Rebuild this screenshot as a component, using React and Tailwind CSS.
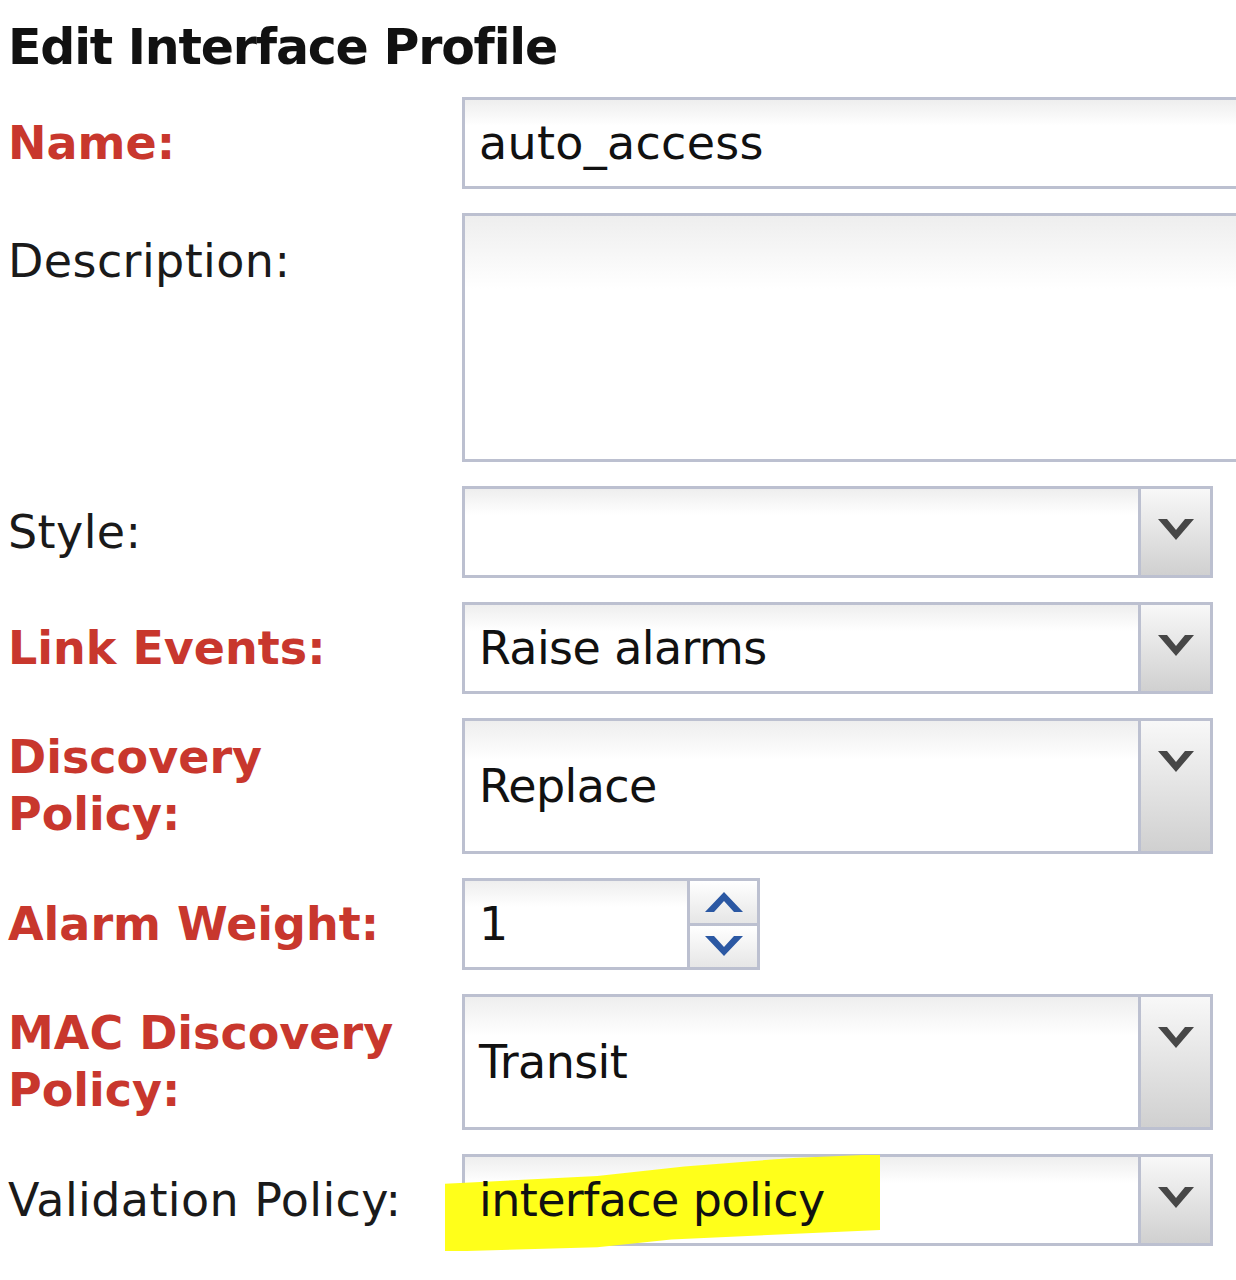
const font = "font-['DejaVu_Sans',Tahoma,sans-serif]"

function Label({ children, required, className = '' }) {
  return (
    <div
      className={
        'text-[46px] leading-[57px] ' +
        (required ? 'font-bold tracking-[0px] text-[#c8372d] ' : 'tracking-[0.4px] text-[#1a1a1a] ') +
        className
      }
    >
      {children}
    </div>
  )
}

function Chevron() {
  return (
    <svg width="36" height="24" viewBox="0 0 36 24">
      <polygon points="0,2 9,2 18,13 27,2 36,2 18,23" fill="#474747" />
    </svg>
  )
}

function Select({ value, tall, highlight }) {
  return (
    <div
      className={
        'relative flex w-[751px] border-[3px] border-[#bcc0d0] bg-gradient-to-b from-[#eeeeee] to-white to-[30%] ' +
        (tall ? 'h-[136px]' : 'h-[92px]')
      }
    >
      {highlight && (
        <div className="absolute left-[-20px] top-[-2px] h-[96px] w-[435px] bg-[#ffff1a] [clip-path:polygon(0_30%,35%_22%,55%_12%,80%_3%,96%_0,100%_0,100%_78%,52%_88%,35%_96%,5%_100%,0_100%)]" />
      )}
      <div className="relative flex flex-1 items-center pl-[14px] text-[46px] tracking-[-0.6px] text-[#111]">
        {value}
      </div>
      <div className="flex w-[72px] justify-center border-l-[3px] border-[#bcc0d0] bg-gradient-to-b from-[#f8f8f8] to-[#d0d0d0] pt-[28px]">
        <Chevron />
      </div>
    </div>
  )
}

function TextBox({ value, height }) {
  return (
    <div
      className={
        'flex w-[800px] items-center border-[3px] border-[#bcc0d0] bg-gradient-to-b from-[#eeeeee] to-white to-[30%] pl-[14px] text-[46px] tracking-[0.3px] text-[#111] ' +
        height
      }
    >
      {value}
    </div>
  )
}

function Spinner() {
  return (
    <div className="flex h-[92px] w-[298px] border-[3px] border-[#bcc0d0] bg-gradient-to-b from-[#eeeeee] to-white to-[30%]">
      <div className="flex flex-1 items-center pl-[14px] text-[46px] text-[#111]">1</div>
      <div className="flex w-[70px] flex-col border-l-[3px] border-[#bcc0d0]">
        <div className="flex flex-1 items-center justify-center border-b-[3px] border-[#bcc0d0] bg-gradient-to-b from-white to-[#e6e6e6]">
          <svg width="38" height="22" viewBox="0 0 38 22">
            <polygon points="0,21 9,21 19,10 29,21 38,21 19,1" fill="#2b58a3" />
          </svg>
        </div>
        <div className="flex flex-1 items-center justify-center bg-gradient-to-b from-white to-[#e6e6e6]">
          <svg width="38" height="22" viewBox="0 0 38 22">
            <polygon points="0,1 9,1 19,12 29,1 38,1 19,21" fill="#2b58a3" />
          </svg>
        </div>
      </div>
    </div>
  )
}

export default function App() {
  const rowCls = 'grid grid-cols-[454px_1fr] items-center'

  return (
    <div className={'min-h-[1280px] w-[1236px] overflow-hidden bg-white pl-[8px] ' + font}>
      <div className="pt-[18px] text-[49px] font-bold leading-[60px] tracking-[-1.2px] text-[#111]">
        Edit Interface Profile
      </div>

      <div className="mt-[19px] flex flex-col gap-[24px]">
        <div className={rowCls}>
          <Label required>Name:</Label>
          <TextBox value="auto_access" height="h-[92px]" />
        </div>

        <div className="grid grid-cols-[454px_1fr] items-start">
          <Label className="pt-[20px]">Description:</Label>
          <TextBox value="" height="h-[249px]" />
        </div>

        <div className={rowCls}>
          <Label>Style:</Label>
          <Select value="" />
        </div>

        <div className={rowCls}>
          <Label required>Link Events:</Label>
          <Select value="Raise alarms" />
        </div>

        <div className={rowCls}>
          <Label required>
            Discovery
            <br />
            Policy:
          </Label>
          <Select value="Replace" tall />
        </div>

        <div className={rowCls}>
          <Label required>Alarm Weight:</Label>
          <Spinner />
        </div>

        <div className={rowCls}>
          <Label required>
            MAC Discovery
            <br />
            Policy:
          </Label>
          <Select value="Transit" tall />
        </div>

        <div className={rowCls}>
          <Label>Validation Policy:</Label>
          <Select value="interface policy" highlight />
        </div>
      </div>
    </div>
  )
}
